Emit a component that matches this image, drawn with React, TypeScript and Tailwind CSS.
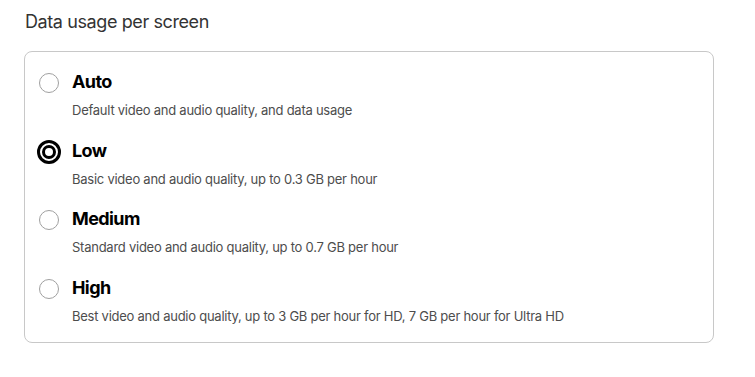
import React from "react";

const items = [
  { label: "Auto", desc: "Default video and audio quality, and data usage" },
  { label: "Low", desc: "Basic video and audio quality, up to 0.3 GB per hour" },
  { label: "Medium", desc: "Standard video and audio quality, up to 0.7 GB per hour" },
  { label: "High", desc: "Best video and audio quality, up to 3 GB per hour for HD, 7 GB per hour for Ultra HD" },
];

function Radio({ checked }: { checked: boolean }) {
  if (checked) {
    return (
      <div className="w-[24px] h-[24px] rounded-full border-[3px] border-black flex items-center justify-center">
        <div className="w-[14px] h-[14px] rounded-full border-[3.5px] border-black bg-white" />
      </div>
    );
  }
  return <div className="w-[20px] h-[20px] rounded-full border border-[#a0a0a0] bg-white" />;
}

export default function App() {
  return (
    <div className="w-[755px] h-[377px] bg-white pl-[24px] pt-[10px]" style={{ fontFamily: "Inter, 'Noto Sans', sans-serif" }}>
      <h2 className="text-[18px] leading-[24px] text-[#333] ml-[1px] tracking-[-0.4px]">Data usage per screen</h2>
      <div className="mt-[17px] w-[690px] h-[292px] border border-[#c8c8c8] rounded-[8px] pt-[16px]">
        {items.map((it, i) => (
          <div key={it.label} className="flex h-[68.5px]">
            <div className="w-[47px] flex justify-center pt-[2px] h-[28px] items-center">
              <Radio checked={i === 1} />
            </div>
            <div className="flex flex-col">
              <div className="text-[18px] leading-[28px] font-bold text-black tracking-[-0.6px]">{it.label}</div>
              <div className="text-[13px] leading-[18px] mt-[5px] text-[#4d4d4d] tracking-[-0.25px]">{it.desc}</div>
            </div>
          </div>
        ))}
      </div>
    </div>
  );
}
